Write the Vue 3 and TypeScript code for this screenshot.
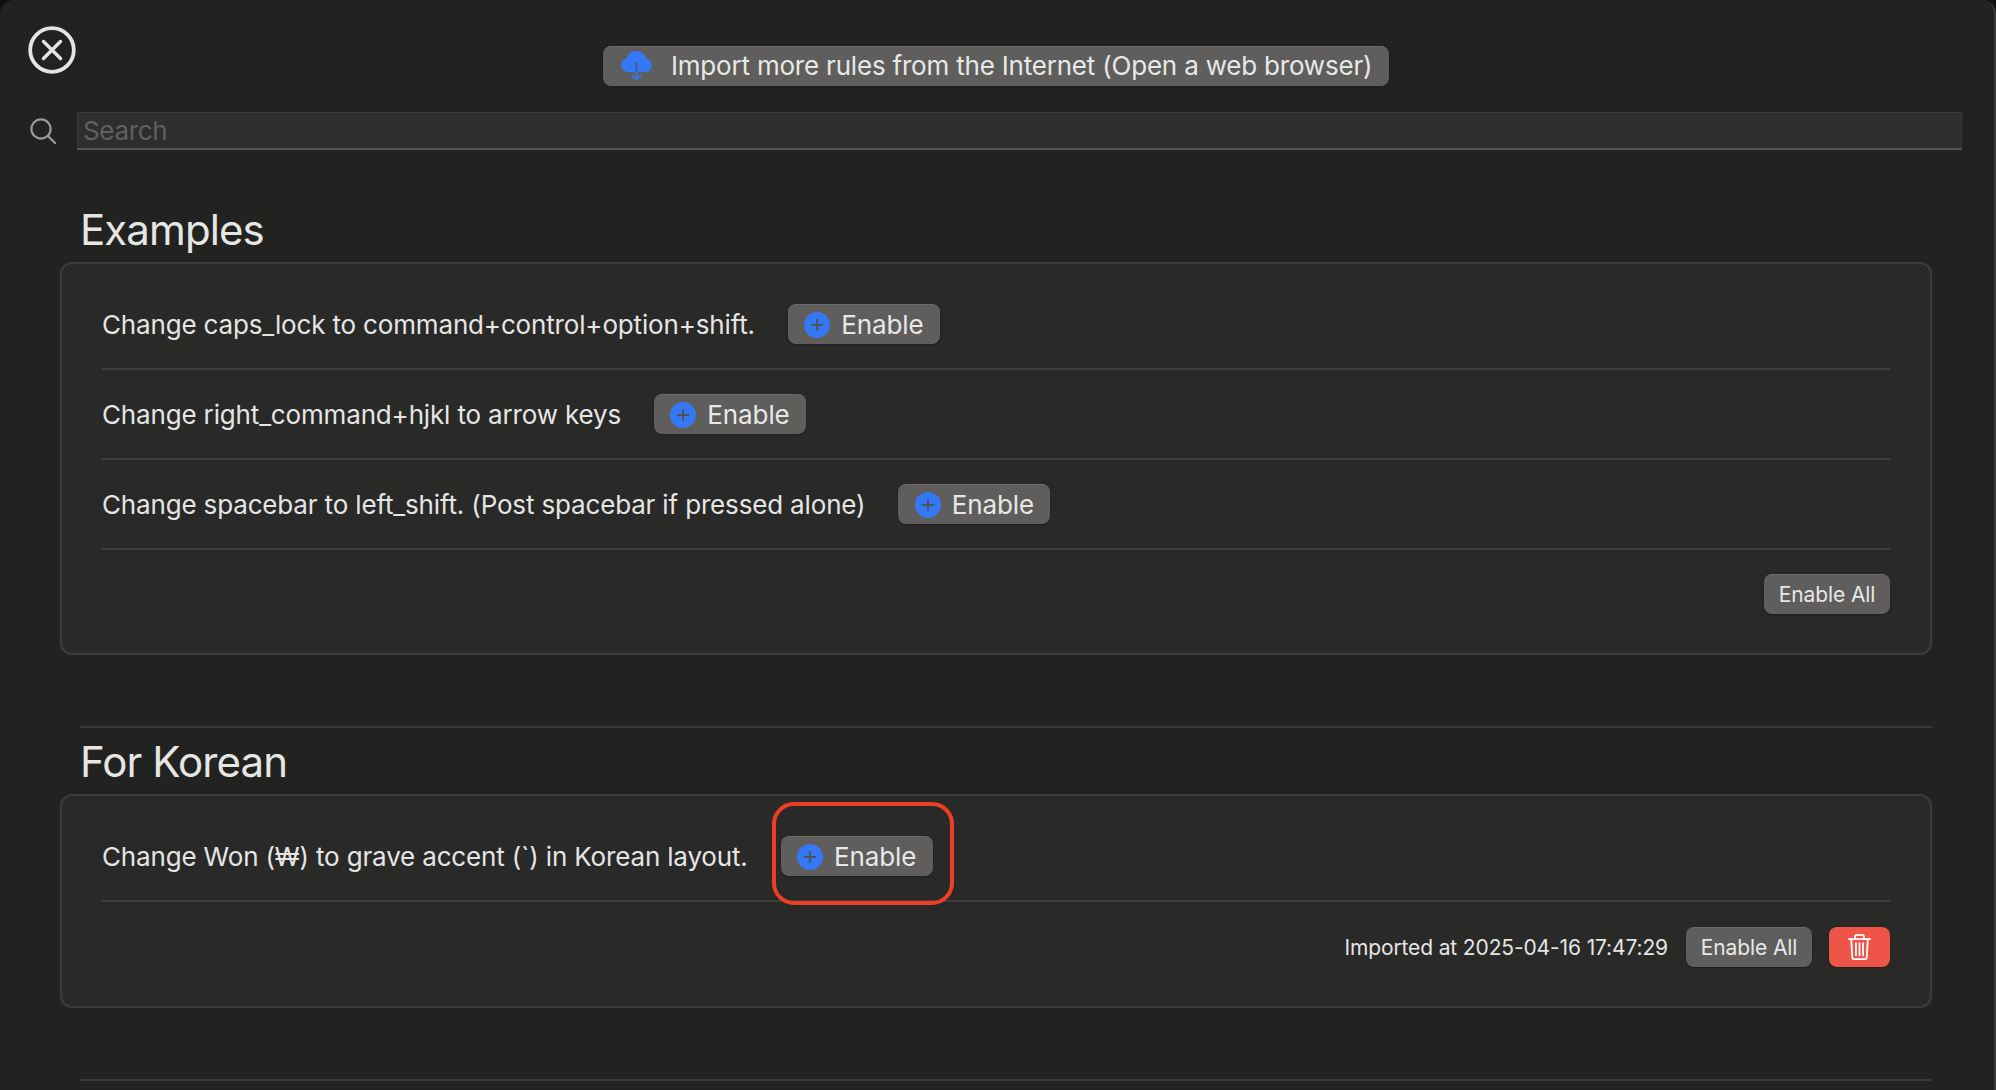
<script setup lang="ts">
interface Rule {
  text: string
}

const examples: Rule[] = [
  { text: 'Change caps_lock to command+control+option+shift.' },
  { text: 'Change right_command+hjkl to arrow keys' },
  { text: 'Change spacebar to left_shift. (Post spacebar if pressed alone)' },
]
const korean: Rule[] = [{ text: 'Change Won (₩) to grave accent (`) in Korean layout.' }]
</script>

<template>
  <div class="window">
    <header class="top">
      <button class="close" aria-label="Close">
        <svg width="48" height="48" viewBox="0 0 48 48" fill="none" stroke="#e4e4e3" stroke-linecap="round">
          <circle cx="24" cy="24" r="21.800" stroke-width="3.800" />
          <path d="M15.500 15.500 32.500 32.500M32.500 15.500 15.500 32.500" stroke-width="3.400" />
        </svg>
      </button>
      <button class="btn import">
        <svg width="34" height="30" viewBox="0 0 34 30">
          <path fill="#3478f6" d="M8 21a7 7 0 0 1-1.600-13.800A10 10 0 0 1 16.600 0a10 10 0 0 1 9.800 8 6.600 6.600 0 0 1-.4 13z" />
          <path d="M16.500 11v10" stroke="#55585e" stroke-width="1.600" fill="none" />
          <path d="M16.500 21v7M11.500 23.500l5 5 5-5" stroke="#3478f6" stroke-width="1.600" fill="none" />
        </svg>
        <span>Import more rules from the Internet (Open a web browser)</span>
      </button>
      <span></span>
    </header>

    <div class="search">
      <svg class="search-icon" width="26" height="26" viewBox="0 0 26 26" fill="none" stroke="#9a9a99" stroke-width="2.200" stroke-linecap="round">
        <circle cx="11" cy="11" r="9.600" />
        <path d="M18 18l7 7" />
      </svg>
      <input class="search-input" type="text" placeholder="Search" />
    </div>

    <main class="main">
      <section class="section">
        <h2 class="heading">Examples</h2>
        <div class="card">
          <div v-for="rule in examples" :key="rule.text" class="row">
            <span>{{ rule.text }}</span>
            <button class="btn enable">
              <span class="plus"></span>
              <span>Enable</span>
            </button>
          </div>
          <div class="footer">
            <button class="btn small">Enable All</button>
          </div>
        </div>
      </section>

      <section class="section ruled">
        <h2 class="heading">For Korean</h2>
        <div class="card">
          <div v-for="rule in korean" :key="rule.text" class="row">
            <span>{{ rule.text }}</span>
            <span class="highlighted">
              <button class="btn enable">
                <span class="plus"></span>
                <span>Enable</span>
              </button>
              <span class="annotation"></span>
            </span>
          </div>
          <div class="footer">
            <span class="imported">Imported at 2025-04-16 17:47:29</span>
            <button class="btn small">Enable All</button>
            <button class="btn danger" aria-label="Delete">
              <svg width="23" height="28" viewBox="0 0 26 30" fill="none" stroke="#fff" stroke-width="2" stroke-linecap="round" stroke-linejoin="round">
                <path d="M1 6h24M8 6V3.200C8 2 8.800 1.200 10 1.200h6c1.200 0 2 .8 2 2V6" />
                <path d="M3.600 6l1.200 20.400c.1 1.500 1 2.400 2.400 2.400h11.600c1.400 0 2.300-.9 2.400-2.400L22.400 6" />
                <path d="M9 10.500v14M13 10.500v14M17 10.500v14" />
              </svg>
            </button>
          </div>
        </div>
      </section>

      <section class="section ruled"></section>
    </main>
  </div>
</template>

<style scoped>
.window {
  box-sizing: border-box;
  width: 1996px;
  height: 1090px;
  overflow: hidden;
  background: #222220;
  border-right: 2px solid #3a3a39;
  border-top-left-radius: 14px;
  border-top-right-radius: 14px;
  color: #e5e5e4;
  font-family: Inter, "Noto Sans CJK KR", sans-serif;
}
.top {
  display: grid;
  grid-template-columns: 1fr auto 1fr;
  align-items: start;
  height: 112px;
  padding-right: 2px;
}
.close {
  justify-self: start;
  display: flex;
  margin: 26px 0 0 28px;
  padding: 0;
  border: 0;
  background: none;
}
.btn {
  display: inline-flex;
  align-items: center;
  justify-content: center;
  box-sizing: border-box;
  height: 40px;
  padding: 0;
  border: 0;
  border-top: 1px solid #6c6b69;
  border-radius: 8px;
  background: #5f5e5c;
  color: #e8e8e7;
  font-family: inherit;
  box-shadow: 0 1px 2px rgba(0, 0, 0, 0.3);
}
.import {
  justify-content: flex-start;
  gap: 17px;
  width: 786px;
  margin-top: 46px;
  padding: 0 0 2px 17px;
  font-size: 26px;
  letter-spacing: -0.2px;
}
.search {
  display: flex;
  align-items: center;
  height: 38px;
  padding-left: 30px;
  margin-right: 32px;
}
.search-icon {
  flex: none;
  margin-right: 21px;
}
.search-input {
  flex: 1;
  box-sizing: border-box;
  height: 38px;
  min-width: 0;
  padding: 0 5px;
  border: 1px solid #3b3b3a;
  border-bottom: 2px solid #555554;
  border-radius: 0;
  outline: 0;
  background: #2e2e2d;
  color: #e5e5e4;
  font-family: inherit;
  font-size: 26px;
  letter-spacing: -0.35px;
}
.search-input::placeholder {
  color: #606060;
  opacity: 1;
}
.main {
  padding: 46px 62px 0 60px;
}
.section.ruled {
  margin-top: 71px;
}
.section.ruled::before {
  content: "";
  display: block;
  height: 2px;
  margin-left: 20px;
  background: #383837;
}
.heading {
  display: flex;
  align-items: flex-end;
  box-sizing: border-box;
  height: 66px;
  margin: 0;
  padding: 0 0 7px 20px;
  color: #e6e6e5;
  font-size: 42px;
  font-weight: 400;
  line-height: 50px;
  letter-spacing: -0.9px;
}
.card {
  box-sizing: border-box;
  padding: 16px 40px 39px;
  border: 2px solid #3c3c3b;
  border-radius: 12px;
  background: #292928;
}
.row {
  display: flex;
  align-items: center;
  gap: 33px;
  box-sizing: border-box;
  height: 90px;
  border-bottom: 2px solid #3e3e3d;
  font-size: 26px;
  letter-spacing: -0.16px;
}
.enable {
  gap: 11px;
  width: 152px;
  font-size: 26px;
  letter-spacing: -0.1px;
}
.plus {
  position: relative;
  flex: none;
  width: 26px;
  height: 26px;
  border-radius: 50%;
  background:
    linear-gradient(#4d5560, #4d5560) center / 12px 2px no-repeat,
    linear-gradient(#4d5560, #4d5560) center / 2px 12px no-repeat,
    #3478f6;
}
.highlighted {
  position: relative;
  display: inline-flex;
}
.annotation {
  position: absolute;
  top: -34px;
  left: -9px;
  width: 182px;
  height: 103px;
  box-sizing: border-box;
  border: 4px solid #ee3f24;
  border-radius: 22px;
  pointer-events: none;
}
.footer {
  display: flex;
  align-items: center;
  justify-content: flex-end;
  gap: 18px;
  padding-top: 24px;
}
.ruled .footer {
  padding-top: 25px;
}
.small {
  width: 126px;
  font-size: 21px;
  letter-spacing: -0.1px;
}
.imported {
  font-size: 21px;
  letter-spacing: -0.13px;
}
.danger {
  width: 61px;
  margin-left: -1px;
  border-top: 0;
  background: #ee5548;
}
</style>

<style>
html,
body {
  background: #111;
}
</style>
